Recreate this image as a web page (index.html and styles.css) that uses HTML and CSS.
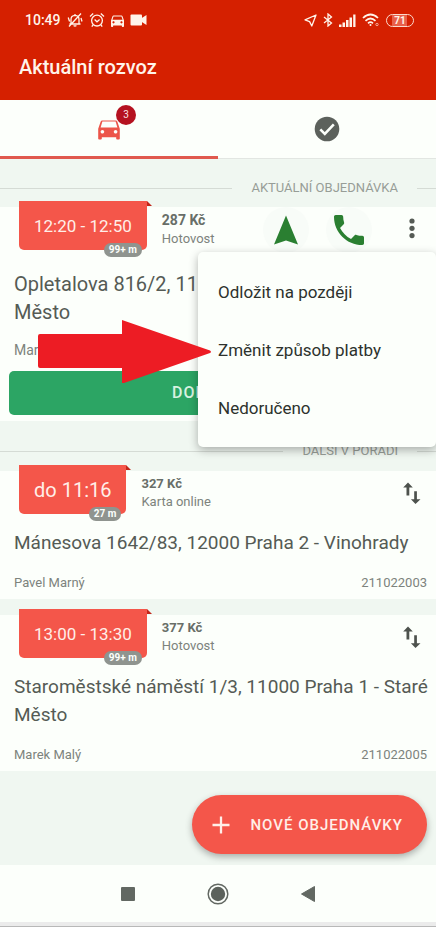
FILE: index.html
```html
<!DOCTYPE html>
<html lang="cs">
<head>
<meta charset="utf-8">
<meta name="viewport" content="width=device-width, initial-scale=1">
<title>Aktuální rozvoz</title>
<link rel="stylesheet" href="styles.css">
</head>
<body>
<header class="appbar">
  <div class="status">
    <div class="status-group">
      <span class="clock">10:49</span>
      <svg class="ico" width="16" height="16" viewBox="0 0 16 16" fill="none" stroke="currentColor" stroke-width="1.3"><path d="M2.5 12h11M4 12V7.5Q4 3.6 8 3.4Q12 3.6 12 7.5V12M8 3.4V2M6.600 13.500q1.400 1.200 2.800 0M14 1.500 2 14.500M1.200 5.500l1.400 4M14 6l1 3.500"/></svg>
      <svg class="ico" width="16" height="16" viewBox="0 0 16 16" fill="none" stroke="currentColor" stroke-width="1.3"><circle cx="8" cy="8.600" r="5.400"/><path d="M5.600 7.600 8 9.800l2.600-2.200M1 4.400 4.200 1.600M15 4.400l-3.200-2.800M4 13l-1.200 1.600M12 13l1.200 1.600"/></svg>
      <svg class="ico" width="13" height="13" viewBox="3 3.500 18 17" fill="currentColor"><path d="M18.920 6.010C18.720 5.420 18.160 5 17.500 5h-11c-.66 0-1.210.42-1.420 1.010L3 12v8c0 .55.45 1 1 1h1c.55 0 1-.45 1-1v-1h12v1c0 .55.45 1 1 1h1c.55 0 1-.45 1-1v-8l-2.080-5.990zM6.500 16c-.83 0-1.500-.67-1.500-1.500S5.670 13 6.500 13s1.500.67 1.500 1.500S7.330 16 6.500 16zm11 0c-.83 0-1.500-.67-1.500-1.500s.67-1.500 1.500-1.500 1.500.67 1.500 1.500-.67 1.500-1.500 1.500zM5 11l1.500-4.500h11L19 11H5z"/></svg>
      <svg class="ico" width="17" height="12" viewBox="0 0 17 12" fill="currentColor"><rect x="0.500" y="0.500" width="11.500" height="11" rx="1"/><path d="M11 4.500 16.500 1v10L11 7.500z"/></svg>
    </div>
    <div class="status-group">
      <svg class="ico" width="13" height="13" viewBox="0 0 13 13" fill="none" stroke="currentColor" stroke-width="1.300" stroke-linejoin="round"><path d="M12 1 7.800 12 5.600 7.600 1 5.800z"/></svg>
      <svg class="ico" width="10" height="14" viewBox="0 0 10 14" fill="none" stroke="currentColor" stroke-width="1.300"><path d="M1 4l7.500 6L5 13V1l3.500 3L1 10"/></svg>
      <svg class="ico" width="17" height="13" viewBox="0 0 17 13" fill="currentColor"><path d="M0 10.500h2.500V13H0zM3.500 8.500H6V13H3.500zM7 6h2.500v7H7zM10.500 3.500H13V13h-2.500zM14.200 0.500h2.300V13h-2.300z"/></svg>
      <svg class="ico" width="18" height="14" viewBox="0 0 18 14" fill="none" stroke="currentColor" stroke-width="1.700"><path d="M1 5Q8.500-2 16 5M3.500 7.800q5-4.600 10 0M6 10.300q2.500-2.200 5 0"/><circle cx="8.500" cy="12" r="1" fill="currentColor" stroke="none"/><circle cx="15" cy="11.500" r="1.200" stroke-width="1" opacity=".6"/></svg>
      <span class="battery">71</span>
    </div>
  </div>
  <h1 class="title">Aktuální rozvoz</h1>
</header>

<nav class="tabs" aria-label="Objednávky">
  <button class="tab tab-active" type="button" aria-label="Rozvoz">
    <span class="tab-icon">
      <svg class="ico" width="24" height="22" viewBox="2 4 20 18" fill="currentColor"><path d="M18.920 6.010C18.720 5.420 18.160 5 17.500 5h-11c-.66 0-1.210.42-1.420 1.010L3 12v8c0 .55.45 1 1 1h1c.55 0 1-.45 1-1v-1h12v1c0 .55.45 1 1 1h1c.55 0 1-.45 1-1v-8l-2.080-5.990zM6.500 16c-.83 0-1.500-.67-1.500-1.500S5.670 13 6.500 13s1.500.67 1.500 1.500S7.330 16 6.500 16zm11 0c-.83 0-1.500-.67-1.500-1.500s.67-1.500 1.500-1.500 1.500.67 1.500 1.500-.67 1.500-1.500 1.500zM5 11l1.500-5h11L19 11H5z"/></svg>
      <span class="count">3</span>
    </span>
  </button>
  <button class="tab" type="button" aria-label="Doručené">
    <svg class="ico" width="26" height="26" viewBox="0 0 26 26"><circle cx="13" cy="13" r="12.300" fill="#5c615c"/><path d="M6.300 13.400l4.500 4.500 9-9.500" fill="none" stroke="#fcfffb" stroke-width="2.600"/></svg>
  </button>
</nav>

<main class="list">
  <h2 class="divider">AKTUÁLNÍ OBJEDNÁVKA</h2>

  <article class="card current">
    <div class="card-head">
      <div class="slot">12:20 - 12:50<span class="dist">99+ m</span></div>
      <div class="pay"><strong class="price">287 Kč</strong><span>Hotovost</span></div>
      <div class="actions">
        <button class="round" type="button" aria-label="Navigovat"><svg class="ico" width="26" height="32" viewBox="0 0 26 32"><path d="M13 1.500 25 30.500 13 26.500 1 30.500z" fill="#2a7f31"/></svg></button>
        <button class="round" type="button" aria-label="Zavolat"><svg class="ico" width="30" height="30" viewBox="3 3 18 18"><path d="M6.620 10.790c1.440 2.830 3.760 5.140 6.590 6.590l2.200-2.200c.27-.27.67-.36 1.020-.24 1.120.37 2.330.57 3.570.57.55 0 1 .45 1 1V20c0 .55-.45 1-1 1-9.390 0-17-7.610-17-17 0-.55.45-1 1-1h3.500c.55 0 1 .45 1 1 0 1.250.2 2.450.57 3.570.11.35.03.74-.25 1.020l-2.200 2.200z" fill="#2a7f31"/></svg></button>
        <button class="icon-btn more" type="button" aria-label="Další akce"><svg class="ico" width="24" height="24" viewBox="0 0 24 24" fill="#555b55"><circle cx="12" cy="4" r="2.600"/><circle cx="12" cy="11.300" r="2.600"/><circle cx="12" cy="18.600" r="2.600"/></svg></button>
      </div>
    </div>
    <p class="address">Opletalova 816/2, 11000 Praha 1 - Staré Město</p>
    <div class="meta"><span>Marie Malá</span></div>
    <button class="deliver" type="button">DORUČENO</button>

    <div class="menu" role="menu">
      <button class="menu-item" type="button" role="menuitem">Odložit na později</button>
      <button class="menu-item" type="button" role="menuitem">Změnit způsob platby</button>
      <button class="menu-item" type="button" role="menuitem">Nedoručeno</button>
    </div>
    <svg class="pointer" width="174" height="64" viewBox="0 0 174 64" aria-hidden="true"><path d="M2 14H84V0L172 30.500Q174 32 172 33L86 63H84V48H2Q0 48 0 46V16Q0 14 2 14z" fill="#ed1c24"/></svg>
  </article>

  <h2 class="divider">DALŠÍ V POŘADÍ</h2>

  <article class="card">
    <div class="card-head">
      <div class="slot slot-large">do 11:16<span class="dist">27 m</span></div>
      <div class="pay"><strong class="price">327 Kč</strong><span>Karta online</span></div>
      <div class="actions">
        <button class="icon-btn" type="button" aria-label="Změnit pořadí"><svg class="ico" width="24" height="24" viewBox="0 0 24 24" fill="#4d524d"><path d="M8 1.500 12.800 6.500H9.300v8H6.500v-8H3.200zM15.500 23 10.900 18.300h3.300v-8h2.700v8h3.600z"/></svg></button>
      </div>
    </div>
    <p class="address">Mánesova 1642/83, 12000 Praha 2 - Vinohrady</p>
    <div class="meta"><span>Pavel Marný</span><span>211022003</span></div>
  </article>

  <article class="card">
    <div class="card-head">
      <div class="slot">13:00 - 13:30<span class="dist">99+ m</span></div>
      <div class="pay"><strong class="price">377 Kč</strong><span>Hotovost</span></div>
      <div class="actions">
        <button class="icon-btn" type="button" aria-label="Změnit pořadí"><svg class="ico" width="24" height="24" viewBox="0 0 24 24" fill="#4d524d"><path d="M8 1.500 12.800 6.500H9.300v8H6.500v-8H3.200zM15.500 23 10.900 18.300h3.300v-8h2.700v8h3.600z"/></svg></button>
      </div>
    </div>
    <p class="address">Staroměstské náměstí 1/3, 11000 Praha 1 - Staré Město</p>
    <div class="meta"><span>Marek Malý</span><span>211022005</span></div>
  </article>

  <div class="fab-row">
    <button class="fab" type="button"><svg class="ico" width="18" height="18" viewBox="0 0 18 18" fill="none" stroke="currentColor" stroke-width="2.300"><path d="M9 .5v17M.5 9h17"/></svg>NOVÉ OBJEDNÁVKY</button>
  </div>
</main>

<nav class="sysnav" aria-label="Systém">
  <button class="sysbtn" type="button" aria-label="Přehled"><svg class="ico" width="16" height="16" viewBox="0 0 16 16"><rect x="1" y="1" width="14" height="14" rx="1" fill="#626862"/></svg></button>
  <button class="sysbtn" type="button" aria-label="Domů"><svg class="ico" width="22" height="22" viewBox="0 0 22 22"><circle cx="11" cy="11" r="9.800" fill="none" stroke="#626862" stroke-width="1.500"/><circle cx="11" cy="11" r="7.200" fill="#5c625c"/></svg></button>
  <button class="sysbtn" type="button" aria-label="Zpět"><svg class="ico" width="16" height="18" viewBox="0 0 16 18"><path d="M1.500 9 14.500 1.500v15z" fill="#626862" stroke="#626862" stroke-linejoin="round"/></svg></button>
</nav>
<div class="edge"></div>
</body>
</html>
```
FILE: styles.css
```css
* { box-sizing: border-box; }

body {
  margin: 0;
  min-height: 100vh;
  display: flex;
  flex-direction: column;
  background: #f0f7f1;
  color: #555b55;
  font-family: Roboto, "Noto Sans", sans-serif;
  font-size: 13px;
  line-height: 16px;
}

button {
  margin: 0;
  padding: 0;
  border: 0;
  background: none;
  color: inherit;
  font: inherit;
}

.ico { display: block; flex: none; }

.appbar {
  height: 100px;
  background: #d52000;
  color: #fff4ea;
}

.status {
  display: flex;
  justify-content: space-between;
  align-items: center;
  height: 40px;
  padding: 0 22px 0 25px;
}

.status-group { display: flex; align-items: center; gap: 6px; }

.clock { font-size: 14px; font-weight: 500; }

.battery {
  width: 28px;
  height: 13px;
  border: 1px solid #fbd9cd;
  border-radius: 7px;
  background: linear-gradient(90deg, #d52000 18%, #e8604a 18% 78%, #d52000 78%);
  font-size: 10px;
  font-weight: 700;
  line-height: 11px;
  text-align: center;
}

.title {
  margin: 0;
  padding: 13px 19px 0;
  font-size: 20px;
  font-weight: 500;
  line-height: 28px;
}

.tabs {
  display: flex;
  height: 59px;
  background: #fcfffb;
  border-bottom: 1px solid #e2e6e2;
}

.tab {
  flex: 1;
  display: flex;
  align-items: center;
  justify-content: center;
}

.tab-active {
  border-bottom: 3px solid #e0594e;
  margin-bottom: -1px;
  color: #ec5549;
}

.tab-icon { position: relative; padding-top: 4px; }

.count {
  position: absolute;
  right: -15px;
  top: -10px;
  width: 20px;
  height: 20px;
  border-radius: 50%;
  background: #b51220;
  color: #fbe3e3;
  font-size: 10px;
  line-height: 20px;
}

.list { flex: 1; display: flex; flex-direction: column; }

.divider {
  display: flex;
  align-items: center;
  gap: 19px;
  height: 48px;
  margin: 0;
  padding-top: 10px;
  color: #979d97;
  font-size: 13px;
  font-weight: 400;
}

.divider::before,
.divider::after {
  content: "";
  height: 1px;
  background: #d5dbd5;
}

.divider::before { flex: 1; }
.divider::after { width: 19px; }

.card {
  position: relative;
  padding-bottom: 8px;
  background: #fcfffb;
}

.card + .card { margin-top: 16px; }

.current { padding-bottom: 6px; }
.current + .divider { height: 50px; }

.card-head {
  display: flex;
  align-items: flex-start;
  height: 58px;
  padding: 0 12px 0 19px;
}

.current .card-head { height: 63px; }

.slot {
  position: relative;
  height: 49px;
  margin-top: -6px;
  padding: 0 15px;
  border-radius: 0 0 5px 5px;
  background: #f4564a;
  color: #ffeee8;
  font-size: 17px;
  line-height: 51px;
}

.slot-large { font-size: 20px; }

.slot::after {
  content: "";
  position: absolute;
  left: 100%;
  top: 0;
  border-style: solid;
  border-width: 5px 0 0 5px;
  border-color: transparent transparent transparent #c2261a;
}

.dist {
  position: absolute;
  right: 5px;
  bottom: -7px;
  padding: 0 5px;
  border-radius: 7px;
  background: #8f948f;
  color: #fcfffb;
  font-size: 10px;
  font-weight: 700;
  line-height: 14px;
}

.pay {
  display: flex;
  flex-direction: column;
  gap: 2px;
  padding: 5px 0 0 15px;
  color: #7d837d;
}

.price { color: #686e68; font-weight: 700; }

.current .price { font-size: 14px; }
.current .pay { gap: 3px; }

.actions {
  display: flex;
  align-items: flex-start;
  gap: 17px;
  margin-left: auto;
}

.round {
  display: flex;
  align-items: center;
  justify-content: center;
  width: 46px;
  height: 46px;
  border-radius: 50%;
  background: #f8fcf8;
}

.icon-btn { padding-top: 10px; }
.more { margin-left: 11px; }

.address {
  margin: 0;
  padding: 0 4px 0 14px;
  font-size: 19px;
  line-height: 28px;
}

.current .address { padding-right: 14px; font-size: 20px; }

.meta {
  display: flex;
  justify-content: space-between;
  margin-top: 18px;
  padding: 0 9px 0 14px;
  color: #7d837d;
  font-size: 13px;
}

.current .meta { margin-top: 16px; font-size: 14px; }

.deliver {
  display: block;
  width: calc(100% - 18px);
  height: 44px;
  margin: 13px 9px 0;
  border-radius: 5px;
  background: #2ca564;
  color: #d8f2e0;
  font-size: 16px;
  font-weight: 500;
  letter-spacing: 1px;
}

.menu {
  position: absolute;
  z-index: 1;
  top: 45px;
  right: 0;
  width: 238px;
  padding: 11px 0 10px;
  border-radius: 5px;
  background: #fcfffb;
  box-shadow: 0 3px 10px rgba(0, 0, 0, .3);
  color: #2d322d;
}

.menu-item {
  display: block;
  width: 100%;
  height: 58px;
  padding: 0 20px;
  font-size: 17px;
  text-align: left;
}

.pointer {
  position: absolute;
  z-index: 2;
  top: 113px;
  left: 38px;
}

.fab-row {
  display: flex;
  flex: 1;
  justify-content: flex-end;
  align-items: flex-end;
  padding: 24px 9px 11px;
}

.fab {
  display: flex;
  align-items: center;
  gap: 20px;
  height: 59px;
  padding: 0 24px 0 20px;
  border-radius: 30px;
  background: #f4564a;
  box-shadow: 0 3px 7px rgba(0, 0, 0, .3);
  color: #ffeee8;
  font-size: 15px;
  font-weight: 500;
  letter-spacing: 1px;
}

.sysnav {
  display: flex;
  align-items: center;
  justify-content: center;
  gap: 60px;
  height: 57px;
  background: #fcfffb;
}

.sysbtn {
  display: flex;
  justify-content: center;
  width: 30px;
}

.edge {
  height: 5px;
  border-bottom: 1px solid #b8b8b8;
  background: #ebebeb;
}
```
